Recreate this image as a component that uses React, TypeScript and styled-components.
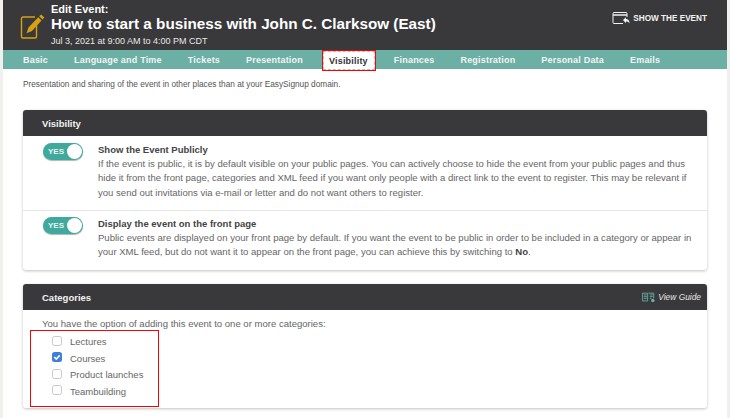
import React from 'react'
import styled, { createGlobalStyle } from 'styled-components'

const GlobalStyle = createGlobalStyle`
  html, body {
    margin: 0;
    padding: 0;
    height: 418px;
    overflow: hidden;
    background: #f1f0ec;
    font-family: "Liberation Sans", Arial, sans-serif;
  }
`

const tabs = ['Basic', 'Language and Time', 'Tickets', 'Presentation', 'Visibility', 'Finances', 'Registration', 'Personal Data', 'Emails']
const categories = [
  { name: 'Lectures', checked: false },
  { name: 'Courses', checked: true },
  { name: 'Product launches', checked: false },
  { name: 'Teambuilding', checked: false },
]

const App: React.FC = () => {
  return (
    <>
      <GlobalStyle />
      <Page>
        <Header>
          <EditIcon viewBox="0 0 26 26" fill="none">
            <path d="M15 3H3a1.500 1.500 0 0 0-1.500 1.500v18A1.500 1.500 0 0 0 3 24h12a1.500 1.500 0 0 0 1.500-1.500V11" stroke="#d9a011" strokeWidth="1.400" />
            <path d="M8.500 13.500l-2 5.800 5.500-2.300L21.500 6.500l-3.300-3.300z" fill="#d9a011" />
            <path d="M19.200 2.300l3.300 3.300 1.800-2-3.200-3z" fill="#d9a011" />
          </EditIcon>
          <Titles>
            <EditLabel>Edit Event:</EditLabel>
            <Title>How to start a business with John C. Clarksow (East)</Title>
            <DateLine>Jul 3, 2021 at 9:00 AM to 4:00 PM CDT</DateLine>
          </Titles>
          <ShowEvent>
            <svg width="18" height="13" viewBox="0 0 18 13" fill="none">
              <path d="M11 11.500H2a1 1 0 0 1-1-1V1.500a1 1 0 0 1 1-1h12a1 1 0 0 1 1 1V5" stroke="#f2f2f2" strokeWidth="1" />
              <path d="M1 3h14" stroke="#f2f2f2" strokeWidth="1.500" />
              <path d="M11 8l3-2.800v1.800c2 0 3.500 1.200 3.500 4.500-.8-1.500-1.800-2-3.500-2v1.800z" fill="#f2f2f2" />
            </svg>
            SHOW THE EVENT
          </ShowEvent>
        </Header>
        <TabBar>
          {tabs.map(tab => (
            <Tab key={tab} $active={tab === 'Visibility'}>{tab}</Tab>
          ))}
        </TabBar>
        <Content>
          <Intro>Presentation and sharing of the event in other places than at your EasySignup domain.</Intro>
          <Panel>
            <PanelHeader>Visibility</PanelHeader>
            <Row>
              <Toggle><ToggleText>YES</ToggleText><Knob /></Toggle>
              <RowText>
                <RowTitle>Show the Event Publicly</RowTitle>
                <RowBody>
                  If the event is public, it is by default visible on your public pages. You can actively choose to hide the event from your public pages and thus hide it from the front page, categories and XML feed if you want only people with a direct link to the event to register. This may be relevant if you send out invitations via e-mail or letter and do not want others to register.
                </RowBody>
              </RowText>
            </Row>
            <Row>
              <Toggle><ToggleText>YES</ToggleText><Knob /></Toggle>
              <RowText>
                <RowTitle>Display the event on the front page</RowTitle>
                <RowBody>
                  Public events are displayed on your front page by default. If you want the event to be public in order to be included in a category or appear in your XML feed, but do not want it to appear on the front page, you can achieve this by switching to <strong>No</strong>.
                </RowBody>
              </RowText>
            </Row>
          </Panel>
          <Panel>
            <PanelHeader>
              Categories
              <ViewGuide>
                <svg width="13" height="11" viewBox="0 0 15 12" fill="none" stroke="#6bb0a5" strokeWidth="1">
                  <path d="M.5 1h6v9h-6zM7.500 1h6v6" />
                  <path d="M2 3h3.500M2 5h3.500M2 7h3.500M9 3h3.500M9 5h3.500M9 7h2" />
                  <circle cx="12.500" cy="9.500" r="2" fill="#6bb0a5" stroke="none" />
                </svg>
                View Guide
              </ViewGuide>
            </PanelHeader>
            <CategoryBody>
              You have the option of adding this event to one or more categories:
              <CategoryList>
                {categories.map(category => (
                  <CategoryRow key={category.name}>
                    <CheckBox $checked={category.checked}>
                      {category.checked && (
                        <svg width="10" height="10" viewBox="0 0 11 11" fill="none">
                          <path d="M2.500 5.500l2.200 2.200 3.800-4" stroke="#fff" strokeWidth="1.800" />
                        </svg>
                      )}
                    </CheckBox>
                    {category.name}
                  </CategoryRow>
                ))}
              </CategoryList>
            </CategoryBody>
          </Panel>
        </Content>
      </Page>
    </>
  )
}

export default App

const Page = styled.div`
  width: 724px;
  height: 418px;
  margin-left: 3px;
  background: #fff;
  overflow: hidden;
`

const Header = styled.div`
  height: 50px;
  display: flex;
  align-items: flex-start;
  background: #39393b;
  color: #fff;
  box-sizing: border-box;
  padding-left: 17px;
`

const EditIcon = styled.svg`
  width: 26px;
  height: 26px;
  margin-top: 14px;
  flex: none;
`

const Titles = styled.div`
  margin-left: 5px;
  display: flex;
  flex-direction: column;
`

const EditLabel = styled.div`
  font-size: 11px;
  font-weight: bold;
  line-height: 13px;
  margin-top: 3px;
`

const Title = styled.div`
  font-size: 15.250px;
  font-weight: bold;
  line-height: 18px;
  margin-top: -1px;
  white-space: nowrap;
`

const DateLine = styled.div`
  font-size: 9px;
  line-height: 12px;
  margin-top: 2px;
  color: #e8e8e8;
`

const ShowEvent = styled.div`
  margin-left: auto;
  margin-right: 20px;
  margin-top: 12px;
  display: flex;
  align-items: center;
  gap: 3px;
  font-size: 8.200px;
  font-weight: bold;
  color: #f2f2f2;
`

const TabBar = styled.div`
  height: 19px;
  display: flex;
  align-items: stretch;
  background: #6cafa5;
  padding-left: 20px;
  gap: 26px;
`

const Tab = styled.div<{ $active?: boolean }>`
  display: flex;
  align-items: center;
  font-size: 9px;
  font-weight: bold;
  letter-spacing: 0.2px;
  color: ${props => (props.$active ? '#333' : '#f4f4f4')};
  ${props => props.$active && `
    background: #fff;
    height: 21px;
    box-sizing: border-box;
    padding: 0 7px 0 6px;
    margin: 0 -8px 0 -7px;
    border: 1px solid #f00;
    outline: 1px dashed #bbb;
    outline-offset: -2px;
    position: relative;
  `}
`

const Content = styled.div`
  padding: 0 20px;
`

const Intro = styled.p`
  margin: 0;
  padding-top: 10px;
  font-size: 8.270px;
  line-height: 11px;
  height: 31px;
  color: #555;
`

const Panel = styled.section`
  background: #fff;
  border-radius: 3px;
  box-shadow: 0 1px 3px rgba(0, 0, 0, 0.25);
  margin-bottom: 14px;
`

const PanelHeader = styled.div`
  height: 26px;
  display: flex;
  align-items: center;
  justify-content: space-between;
  padding: 0 6px 0 19px;
  background: #39393b;
  border-radius: 3px 3px 0 0;
  color: #f2f2f2;
  font-size: 9.500px;
  font-weight: bold;
`

const ViewGuide = styled.span`
  display: flex;
  align-items: center;
  gap: 3px;
  font-size: 8.400px;
  font-weight: normal;
  font-style: italic;
  color: #e8e8e8;
`

const Row = styled.div`
  display: flex;
  padding: 7px 12px 10px 20px;
  & + & {
    border-top: 1px solid #e5e5e5;
    padding-top: 6px;
    padding-bottom: 11px;
  }
`

const Toggle = styled.div`
  flex: none;
  width: 40px;
  height: 17px;
  display: flex;
  align-items: center;
  justify-content: space-between;
  box-sizing: border-box;
  padding: 0 1px 0 5px;
  border-radius: 9px;
  background: #3ea99c;
  box-shadow: 0 1px 1px rgba(0, 0, 0, 0.3);
  margin-right: 15px;
`

const ToggleText = styled.span`
  font-size: 8px;
  font-weight: bold;
  color: #e9f5f3;
`

const Knob = styled.span`
  width: 15px;
  height: 15px;
  border-radius: 50%;
  background: #fff;
`

const RowText = styled.div`
  min-width: 0;
`

const RowTitle = styled.div`
  font-size: 9.500px;
  font-weight: bold;
  line-height: 14px;
  color: #444;
`

const RowBody = styled.div`
  font-size: 9.550px;
  line-height: 14.300px;
  color: #666;
  strong {
    color: #444;
  }
`

const CategoryBody = styled.div`
  padding: 8px 19px 0;
  height: 90px;
  font-size: 9.550px;
  line-height: 12px;
  color: #666;
`

const CategoryList = styled.div`
  box-sizing: border-box;
  width: 129px;
  height: 77px;
  margin: 0 0 0 -12px;
  padding: 5px 0 0 21px;
  border: 1px solid #f00;
  display: flex;
  flex-direction: column;
  gap: 4.500px;
`

const CategoryRow = styled.label`
  display: flex;
  align-items: center;
  gap: 8px;
  height: 12px;
  font-size: 9.500px;
  color: #666;
`

const CheckBox = styled.span<{ $checked?: boolean }>`
  flex: none;
  width: 10px;
  height: 10px;
  margin-top: -3px;
  display: flex;
  box-sizing: border-box;
  border-radius: 2.500px;
  border: ${props => (props.$checked ? 'none' : '1px solid #c8c8c8')};
  background: ${props => (props.$checked ? '#3f7fdc' : '#fff')};
`
